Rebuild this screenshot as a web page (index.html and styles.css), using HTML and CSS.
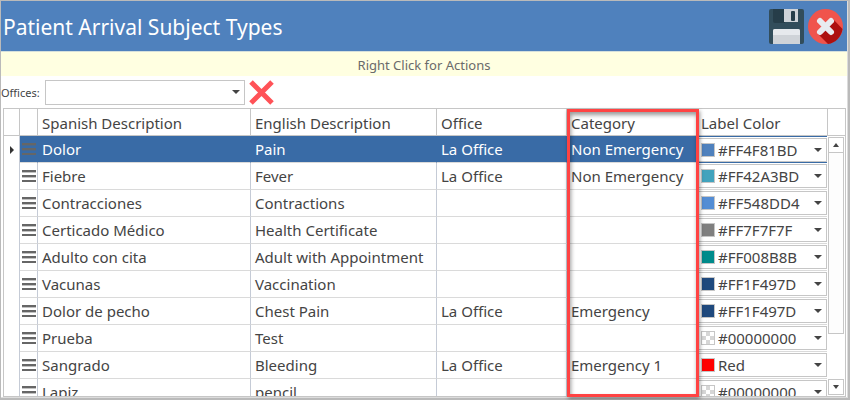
FILE: index.html
```html
<!DOCTYPE html>
<html lang="en">

<head>
  <meta charset="UTF-8">
  <meta name="viewport" content="width=device-width, initial-scale=1.0">
  <title>Patient Arrival Subject Types</title>
  <link rel="stylesheet" href="styles.css">
</head>

<body>
  <div class="window">
    <header class="titlebar">
      <h1 class="titlebar__text">Patient Arrival Subject Types</h1>
      <button class="titlebar__button" type="button" aria-label="Save">
        <svg width="35" height="35" viewBox="0 0 35 35">
          <path fill="#324d5b" d="M2 0h31a2 2 0 0 1 2 2v31a2 2 0 0 1-2 2H2a2 2 0 0 1-2-2V2a2 2 0 0 1 2-2z" />
          <path fill="#263d49" d="M4 0h12v14H6a2 2 0 0 1-2-2z" />
          <path fill="#cfd3d8" d="M15 0h14v13H15z" />
          <rect x="22" y="2" width="4" height="10" rx="1" fill="#263d49" />
          <path fill="#cfd3d8" d="M4 22a2 2 0 0 1 2-2h23a2 2 0 0 1 2 2v13H4z" />
          <path fill="#e6e9ed" d="M4 22a2 2 0 0 1 2-2h23a2 2 0 0 1 2 2v4H4z" />
        </svg>
      </button>
      <button class="titlebar__button" type="button" aria-label="Close">
        <svg width="35" height="35" viewBox="0 0 35 35">
          <circle cx="17.500" cy="17.500" r="17.500" fill="#f0544c" />
          <path fill="#ad1010" d="M25 10l9.500 10A17.500 17.500 0 0 1 20 35l-9.500-9.500z" />
          <path d="M12 12l11 11M23 12L12 23" stroke="#e8ebf0" stroke-width="6" stroke-linecap="round" />
        </svg>
      </button>
    </header>

    <div class="hint">Right Click for Actions</div>

    <div class="filter">
      <label class="filter__label" for="offices">Offices:</label>
      <div class="combo filter__combo">
        <select id="offices" class="combo__select">
          <option></option>
          <option>La Office</option>
        </select>
        <svg class="combo__arrow" width="8" height="4" viewBox="0 0 8 4"><path d="M0 0h8L4 4z" /></svg>
      </div>
      <button class="filter__clear" type="button" aria-label="Clear office">
        <svg width="25" height="25" viewBox="0 0 25 25">
          <path d="M2 2l21 21M23 2L2 23" stroke="#ff5257" stroke-width="5" />
        </svg>
      </button>
    </div>

    <main class="grid">
      <div class="grid__body">
        <table class="types">
          <colgroup>
            <col class="types__col-marker">
            <col class="types__col-grip">
            <col>
            <col class="types__col-english">
            <col class="types__col-office">
            <col class="types__col-category">
            <col class="types__col-color">
          </colgroup>
          <thead>
            <tr>
              <th></th>
              <th></th>
              <th>Spanish Description</th>
              <th>English Description</th>
              <th>Office</th>
              <th>Category</th>
              <th>Label Color</th>
            </tr>
          </thead>
          <tbody id="rows"></tbody>
        </table>
      </div>
      <div class="scroll">
        <div class="scroll__head"></div>
        <div class="scroll__track">
          <button class="scroll__button" type="button" aria-label="Scroll up">
            <svg width="6" height="4" viewBox="0 0 6 4"><path d="M0 4h6L3 0z" /></svg>
          </button>
          <div class="scroll__thumb"></div>
          <button class="scroll__button scroll__button--down" type="button" aria-label="Scroll down">
            <svg width="6" height="4" viewBox="0 0 6 4"><path d="M0 0h6L3 4z" /></svg>
          </button>
        </div>
      </div>
      <div class="grid__highlight"></div>
    </main>
  </div>

  <script src="script.js"></script>
</body>

</html>
```
FILE: styles.css
```css
* {
  box-sizing: border-box;
}

body {
  margin: 0;
  background: #fff;
  color: #444;
  font-family: "Noto Sans", "Open Sans", sans-serif;
  font-size: 15px;
}

button {
  padding: 0;
  border: 0;
  background: none;
  cursor: pointer;
}

svg {
  display: block;
}

.window {
  display: flex;
  flex-direction: column;
  height: 100vh;
  border: 1px solid #bababa;
  border-width: 1px 2px 2px 1px;
  box-shadow: inset -1px -1px #dcdcdc, inset 0 1px #dcdcdc;
}

/* Title bar */
.titlebar {
  display: flex;
  align-items: center;
  gap: 4px;
  height: 50px;
  margin-right: 1px;
  padding: 0 4px 0 2px;
  background: #4f81bd;
}

.titlebar__text {
  flex: 1;
  margin: 0;
  padding-top: 2px;
  color: #fff;
  font-size: 21px;
  font-weight: 400;
}

.hint {
  height: 25px;
  margin-right: 1px;
  border-top: 1px solid #d5e0dc;
  background: #ffffe1;
  color: #6a6a6a;
  font-size: 13px;
  line-height: 26px;
  text-align: center;
}

/* Office filter */
.filter {
  display: flex;
  align-items: center;
  height: 32px;
}

.filter__label {
  width: 44px;
  font-size: 11px;
}

.filter__combo {
  width: 200px;
  height: 25px;
}

.filter__clear {
  margin-left: 4px;
}

.combo {
  display: flex;
  align-items: center;
  position: relative;
  border: 1px solid #c6c6c6;
  background: #fff;
}

.combo__select {
  flex: 1;
  min-width: 0;
  height: 100%;
  margin: 0;
  padding: 0 16px 0 3px;
  border: 0;
  outline: 0;
  appearance: none;
  background: transparent;
  color: #444;
  font: inherit;
}

.combo__arrow {
  position: absolute;
  right: 4px;
  fill: #444;
  pointer-events: none;
}

/* Grid */
.grid {
  display: flex;
  position: relative;
  flex: 1;
  min-height: 0;
  margin: 0 2px 1px;
  border: 1px solid #c6c6c6;
}

.grid__body {
  flex: 1;
  min-width: 0;
  overflow: hidden;
}

.types {
  width: 100%;
  border-collapse: separate;
  border-spacing: 0;
  table-layout: fixed;
}

.types__col-marker {
  width: 16px;
}

.types__col-grip {
  width: 18px;
}

.types__col-english {
  width: 186px;
}

.types__col-office,
.types__col-category,
.types__col-color {
  width: 130px;
}

.types th,
.types td {
  height: 27px;
  padding: 0 0 0 4px;
  border-right: 1px solid #c5cbd6;
  border-bottom: 1px solid #dadada;
  font-weight: 400;
  line-height: 20px;
  text-align: left;
  white-space: nowrap;
}

.types th {
  padding-top: 2px;
  border-color: #c6c6c6;
}

.types th:last-child,
.types td:last-child {
  border-right: 0;
}

.types .types__marker {
  padding: 0 0 0 6px;
  border-bottom: 0;
}

.types .types__grip {
  padding: 0 0 0 2px;
}

.types .types__color {
  padding: 0;
}

.types__row--selected td {
  border-right-color: #396ba6;
  background: #396ba6;
  color: #fff;
}

.types__row--selected .types__marker {
  border-right-color: #c5cbd6;
  background: #fff;
}

.types__row--selected .types__color {
  border-top: 1px solid #396ba6;
  border-bottom-color: #396ba6;
  background: #fff;
}

.combo--color {
  height: 24px;
  padding-left: 3px;
}

.swatch {
  width: 14px;
  height: 14px;
  border: 1px solid #c6c6c6;
}

.swatch--empty {
  background: repeating-conic-gradient(#d6d6d6 0 25%, #fff 0 50%) 0 0 / 8px 8px;
}

/* Frame around the Category column */
.grid__highlight {
  position: absolute;
  top: 0;
  right: 146px;
  bottom: -1px;
  width: 132px;
  border: 3px solid #ff4343;
  box-shadow: 1px 2px 4px rgba(0, 0, 0, .4), inset 1px 3px 4px rgba(0, 0, 0, .4);
  pointer-events: none;
}

/* Scroll bar */
.scroll {
  display: flex;
  flex-direction: column;
  width: 18px;
}

.scroll__head {
  height: 27px;
  border-bottom: 1px solid #c6c6c6;
  border-left: 1px solid #c6c6c6;
}

.scroll__track {
  display: flex;
  flex: 1;
  flex-direction: column;
  padding: 1px;
}

.scroll__button {
  display: flex;
  align-items: center;
  justify-content: center;
  height: 16px;
  border: 1px solid #c6c6c6;
  fill: #444;
}

.scroll__thumb {
  height: 70%;
  border: 1px solid #c6c6c6;
  border-top: 0;
  background: #fdfdfd;
}

.scroll__button--down {
  margin-top: auto;
}
```
FILE: script.js
```js
var rows = [
  { spanish: 'Dolor', english: 'Pain', office: 'La Office', category: 'Non Emergency', label: '#FF4F81BD', color: '#4f81bd', selected: true },
  { spanish: 'Fiebre', english: 'Fever', office: 'La Office', category: 'Non Emergency', label: '#FF42A3BD', color: '#42a3bd' },
  { spanish: 'Contracciones', english: 'Contractions', office: '', category: '', label: '#FF548DD4', color: '#548dd4' },
  { spanish: 'Certicado Médico', english: 'Health Certificate', office: '', category: '', label: '#FF7F7F7F', color: '#7f7f7f' },
  { spanish: 'Adulto con cita', english: 'Adult with Appointment', office: '', category: '', label: '#FF008B8B', color: '#008b8b' },
  { spanish: 'Vacunas', english: 'Vaccination', office: '', category: '', label: '#FF1F497D', color: '#1f497d' },
  { spanish: 'Dolor de pecho', english: 'Chest Pain', office: 'La Office', category: 'Emergency', label: '#FF1F497D', color: '#1f497d' },
  { spanish: 'Prueba', english: 'Test', office: '', category: '', label: '#00000000', color: '' },
  { spanish: 'Sangrado', english: 'Bleeding', office: 'La Office', category: 'Emergency 1', label: 'Red', color: '#ff0000' },
  { spanish: 'Lapiz', english: 'pencil', office: '', category: '', label: '#00000000', color: '' }
]

var marker = '<svg width="4" height="8" viewBox="0 0 4 8"><path d="M0 0l4 4-4 4z" fill="#333" /></svg>'
var grip = '<svg width="14" height="12" viewBox="0 0 14 12" stroke="#666"><path d="M0 1h14M0 6h14M0 11h14" stroke-width="2" />' +
  '<path d="M0 2.500h14M0 7.500h14" stroke-opacity=".4" /></svg>'
var arrow = '<svg class="combo__arrow" width="8" height="4" viewBox="0 0 8 4"><path d="M0 0h8L4 4z" /></svg>'

function swatch(color) {
  if (!color) {
    return '<span class="swatch swatch--empty"></span>'
  }
  return '<span class="swatch" style="background: ' + color + '"></span>'
}

document.getElementById('rows').innerHTML = rows.map(function (row) {
  return '<tr class="' + (row.selected ? 'types__row--selected' : '') + '">' +
    '<td class="types__marker">' + (row.selected ? marker : '') + '</td>' +
    '<td class="types__grip">' + grip + '</td>' +
    '<td>' + row.spanish + '</td>' +
    '<td>' + row.english + '</td>' +
    '<td>' + row.office + '</td>' +
    '<td>' + row.category + '</td>' +
    '<td class="types__color"><div class="combo combo--color">' + swatch(row.color) +
    '<select class="combo__select" aria-label="Label color for ' + row.spanish + '"><option>' + row.label + '</option></select>' +
    arrow + '</div></td>' +
    '</tr>'
}).join('')
```
